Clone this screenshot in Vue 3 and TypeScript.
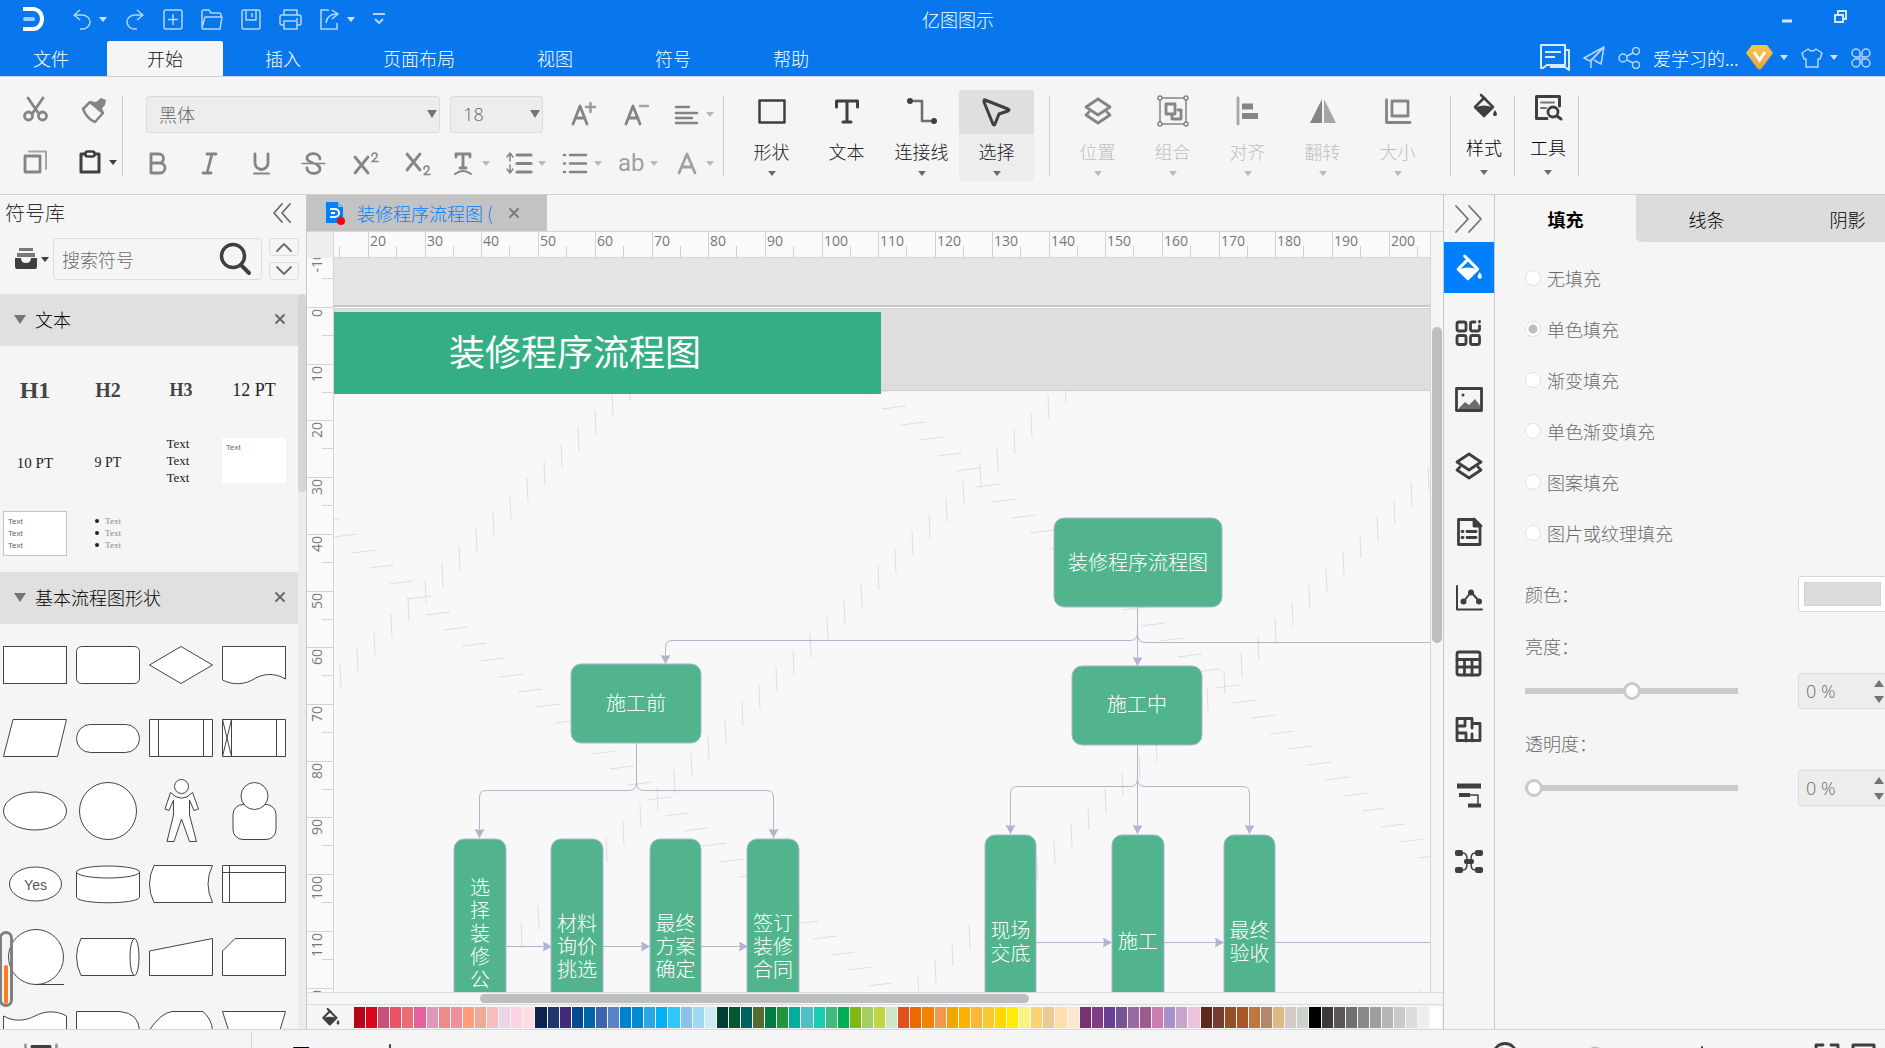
<script setup lang="ts">
import { ref } from 'vue'

interface Tool { label: string; icon: string; caret?: boolean; active?: boolean }
interface Node { x: number; y: number; w: number; h: number; lines: string[]; ty: number }

const menus = ['插入', '页面布局', '视图', '符号', '帮助']

const bucket = '<path d="M9 1l4 4"/><path d="M12 4l9 9-9 9-9-9z"/><path d="M4 13q8-3 16 0l-8 9z" fill="currentColor" stroke="none"/><path d="M23 16c3 4 2 6 0 6s-3-2 0-6z" fill="currentColor" stroke="none"/>'
const layers = '<path d="M14 2l12 8-12 8L2 10z"/><path d="M5 15l-3 3 12 8 12-8-3-3"/>'

const quick = [
  { name: '撤销', w: 20, caret: true, icon: '<path d="M8 1L2 6l6 5M2 6h8a8 7 0 010 14H8"/>' },
  { name: '重做', w: 20, icon: '<path d="M12 1l6 5-6 5M18 6h-8a8 7 0 000 14h2"/>' },
  { name: '新建', w: 20, icon: '<rect x="1" y="1" width="18" height="19" rx="2"/><path d="M10 5v11M5 10.500h10"/>' },
  { name: '打开', w: 22, icon: '<path d="M1 19V3q0-2 2-2h5l2 3h8q2 0 2 2v2M1 19L4 8h17l-2 12H2q-1 0-1-1z"/>' },
  { name: '保存', w: 20, icon: '<rect x="1" y="1" width="18" height="19" rx="2"/><path d="M5 1v10h10V1M11 4v4"/>' },
  { name: '打印', w: 23, icon: '<path d="M5 6V1h13v5M5 16H3q-2 0-2-2V8q0-2 2-2h17q2 0 2 2v6q0 2-2 2h-2M18 9v2"/><path d="M5 12h13v8H5z"/>' },
  { name: '导出', w: 20, caret: true, icon: '<path d="M9 1H1v19h16v-6M6 14q1-9 11-9M12 1l6 4-6 5"/>' }
]

const drawTools: Tool[] = [
  { label: '形状', caret: true, icon: '<rect x="1.500" y="2.500" width="25" height="22" stroke-width="2.500"/>' },
  { label: '文本', icon: '<path d="M3.500 9V3h21v6M14 3v21M10 24h8" stroke-width="3"/>' },
  { label: '连接线', caret: true, icon: '<circle cx="2" cy="3" r="3" fill="currentColor" stroke="none"/><circle cx="26" cy="23" r="3" fill="currentColor" stroke="none"/><path d="M6 3h8v20h8" stroke-opacity=".75" stroke-width="2.500"/>' },
  { label: '选择', caret: true, active: true, icon: '<path d="M2 2l23 9q2 1 0 2l-9 3-4 10q-1 2-2 0L1 4q0-3 1-2z" stroke-width="3"/>' }
]
const arrangeTools: Tool[] = [
  { label: '位置', caret: true, icon: '<g transform="translate(0 -1)">' + layers + '</g>' },
  { label: '组合', caret: true, icon: '<g stroke-width="1.500"><rect x="1" y="0" width="26" height="26"/></g><rect x="7" y="6" width="9" height="10"/><path d="M19 12h3v9h-9v-3"/><g fill="#f5f5f5" stroke-width="1.500"><circle cx="1" cy="0" r="2"/><circle cx="27" cy="0" r="2"/><circle cx="1" cy="26" r="2"/><circle cx="27" cy="26" r="2"/></g>' },
  { label: '对齐', caret: true, icon: '<path d="M4 0v26" stroke-opacity=".7"/><path d="M8 8.500h11M8 18h16" stroke-width="6" stroke-linecap="butt"/>' },
  { label: '翻转', caret: true, icon: '<path d="M13 1v24H1z" fill="currentColor" stroke="none"/><path d="M15 1v24h12z" fill="currentColor" stroke="none" opacity=".7"/>' },
  { label: '大小', caret: true, icon: '<path d="M2.500 2v22.500H26"/><rect x="8" y="3" width="16" height="15"/>' }
]
const endTools: Tool[] = [
  { label: '样式', caret: true, icon: '<g transform="translate(2 1)" stroke-width="2.500">' + bucket + '</g>' },
  { label: '工具', caret: true, icon: '<path d="M13 25.500H2.500v-22h23V13" stroke-width="3"/><path d="M7 9.500h13M7 15h5" stroke-width="2" stroke-opacity=".7"/><circle cx="19" cy="19" r="5"/><path d="M23 23l4 3" stroke-width="3"/>' }
]

const formats = [
  { name: '加粗', icon: '<path d="M6 3h8a4.500 4.500 0 010 9H6zM6 12h9a5 5 0 010 10H6z"/>' },
  { name: '斜体', icon: '<path d="M10 3h9M6 22h8M15 3l-5 19"/>' },
  { name: '下划线', icon: '<path d="M6 3v9a6.500 6.500 0 0013 0V3"/><path d="M5 22.500h15" stroke-width="2"/>' },
  { name: '删除线', icon: '<path d="M19 8c0-7-13-7-13-1 0 3 3 4 6 5M6 17c0 7 13 7 13 1 0-3-2-4-4-5"/><path d="M1 12.500h23" stroke-width="1.500"/>' },
  { name: '上标', icon: '<path d="M2 6l13 16M15 6L2 22"/><path d="M19 5q0-3 2.500-3T24 4.500q0 2-5 6h6" stroke-width="1.500"/>' },
  { name: '下标', icon: '<path d="M2 3l13 16M15 3L2 19"/><path d="M19 18q0-3 2.500-3t2.500 2.500q0 2-5 6h6" stroke-width="1.500"/>' }
]
const formatMenus = [
  { name: '文字方向', icon: '<path d="M6 6V3h14v3M13 3v14M10 17h6"/><path d="M5 23q8-6 16 0" stroke-width="2"/>' },
  { name: '行距', icon: '<path d="M1 6l3-4 3 4M1 18l3 4 3-4M4 3v7M4 14v7" stroke-width="1.500"/><path d="M11 4h14M11 12.500h14M11 21h14" stroke-width="3"/>' },
  { name: '项目符号', icon: '<path d="M8 4h16M8 12.500h16M8 21h16M2 4h1M2 12.500h1M2 21h1" stroke-width="2.500"/>' }
]

const sideTools = [
  { name: '图形', icon: '<rect x="2" y="2" width="9" height="9" rx="2"/><rect x="2" y="15.500" width="9" height="9" rx="2"/><rect x="15.500" y="15.500" width="9" height="9" rx="2"/><path d="M20 2h-3q-1.500 0-1.500 2v5q0 2 2 2h5q2 0 2-2V6"/><path d="M24.500 1.500v.5"/>' },
  { name: '图片', icon: '<rect x="1.500" y="2.500" width="25" height="22"/><path d="M4 22l6-6 4 3 6-6 6 8v2H4z" fill="currentColor" stroke="none" opacity=".75"/><circle cx="8" cy="9" r="1.500" fill="currentColor" stroke="none"/>' },
  { name: '图层', icon: layers },
  { name: '页面', icon: '<path d="M3.500 1.500H19l6 6v19H3.500z"/><path d="M19 1v7h7z" fill="currentColor"/><path d="M12 13.500h9M12 19.500h9M7 13.500h1M7 19.500h1"/>' },
  { name: '图表', icon: '<path d="M2 2v23.500h25M9 17l7-9 8 9" stroke-width="2"/><g fill="currentColor" stroke="none"><circle cx="8.500" cy="17.500" r="3"/><circle cx="16" cy="8.500" r="3"/><circle cx="24" cy="17.500" r="3"/></g>' },
  { name: '表格', icon: '<rect x="2" y="2" width="23" height="23" rx="2"/><path d="M2 9.500h23M2 17h23M9.500 10v15M17 10v15"/>' },
  { name: '平面图', icon: '<path d="M2 2.500h15v5h8v17H2zM2 10h8V4M2 17h9v8M17 7v5M17 25v-7"/>' },
  { name: '甘特图', icon: '<path d="M2 4h24" stroke-width="5" stroke-linecap="butt"/><path d="M4 13h11M13 23.500h13" stroke-width="4" stroke-linecap="butt"/><path d="M15 13h8v10" stroke-width="1.500"/>' },
  { name: '思维导图', icon: '<g fill="currentColor" stroke="none"><rect x="0" y="2" width="8" height="6" rx="2"/><rect x="20" y="2" width="8" height="6" rx="2"/><rect x="0" y="19" width="8" height="6" rx="2"/><rect x="20" y="19" width="8" height="6" rx="2"/><rect x="9" y="11" width="10" height="5" rx="2"/></g><path d="M8 5q4 0 4 6v5q0 6-4 6M20 5q-4 0-4 6v5q0 6 4 6" stroke-width="1.500"/>' }
]

const shapes = [
  '<rect x=".5" y="13.500" width="63" height="37"/>',
  '<rect x=".5" y="13.500" width="63" height="37" rx="5"/>',
  '<path d="M.5 32L32 13.500 63.500 32 32 50.500z"/>',
  '<path d="M.5 13.500h63V46C52 39 40 41 32 46S12 53 .5 47z"/>',
  '<path d="M10 13.500h53.500l-9 37H.5z"/>',
  '<rect x=".5" y="18.500" width="63" height="28" rx="14"/>',
  '<path d="M.5 13.500h63v37H.5zM9.500 13.500v37M54.500 13.500v37"/>',
  '<path d="M.5 13.500h63v37H.5zM9.500 13.500v37M54.500 13.500v37M.5 13.500l9 37M9.500 13.500l-9 37"/>',
  '<ellipse cx="32" cy="32" rx="31.500" ry="19"/>',
  '<circle cx="32" cy="32" r="28.500"/>',
  '<circle cx="32.500" cy="7.500" r="7"/><path d="M21.500 13.500L16 30l4 1.500L24.500 21v15L18 62.500h7L32.500 40l8 22.500h7L40.500 36V21L45 31.500l4.500-1.500-6-16.500Q32.500 25 21.500 13.500z"/>',
  '<rect x="11" y="25.500" width="43" height="35" rx="10"/><circle cx="32.500" cy="17" r="13.500"/>',
  '<ellipse cx="32.500" cy="32" rx="26" ry="17"/><text x="32.500" y="38" text-anchor="middle">Yes</text>',
  '<path d="M.5 20v25.500c4 7 59 7 63 0V20"/><ellipse cx="32" cy="20" rx="31.500" ry="6"/>',
  '<path d="M5 13.500h58.500q-9 18 0 37H5q-9-18 0-37z"/>',
  '<path d="M.5 13.500h63v37H.5zM7.500 13.500v37M.5 20.500h63"/>',
  '<circle cx="33" cy="32" r="27.500"/><path d="M33 59.500h28"/>',
  '<path d="M59 13.500H5q-9 18 0 37h54"/><ellipse cx="58.500" cy="32" rx="4.500" ry="18.500"/>',
  '<path d="M.5 26l63-12.500v37H.5z"/>',
  '<path d="M13 13.500h50.500v37H.5V26z"/>',
  '<path d="M.5 18c10 6 22 5 31.500 0s21-6 31.500 0v40H.5z"/>',
  '<path d="M.5 13.500H44q19 2 19.500 19V50H.5z"/>',
  '<path d="M.5 32Q12 15 23 13.500h31q9 8 9.500 19L54 50H23z"/>',
  '<path d="M.5 13.500h63l-11 37h-40z"/>'
]

const step = 56.71
const hMarks = Array.from({ length: 20 }, (_, i) => ({ label: i ? String(i * 10 + 10) : '', at: Math.round(35 + (i - 1) * step) }))
const vMarks = Array.from({ length: 14 }, (_, i) => ({ label: String(i * 10 - 10), at: Math.round(49 + (i - 1) * step) }))

const run = (x: number, y: number, dx: number, dy: number, n: number) =>
  Array.from({ length: n }, (_, i) => [Math.round(x + dx * i), Math.round(y + dy * i)])
const steep = [
  ...run(295, 118, -17, 17, 18),
  ...run(731, 121, -17, 17, 37),
  ...run(1094, 208, -17, 17, 32),
  ...run(1086, 732, -17, 17, 1)
]
const flat = [...run(-19, 264, 18.43, 15.45, 31), ...run(530, 136, 18.45, 15.45, 31)]

const nodes: Node[] = [
  { x: 720, y: 260, w: 168, h: 89, lines: ['装修程序流程图'], ty: 303 },
  { x: 237, y: 406, w: 130, h: 79, lines: ['施工前'], ty: 444 },
  { x: 738, y: 408, w: 130, h: 79, lines: ['施工中'], ty: 445 },
  { x: 120, y: 581, w: 52, h: 230, lines: ['选', '择', '装', '修', '公'], ty: 628 },
  { x: 217, y: 581, w: 52, h: 230, lines: ['材料', '询价', '挑选'], ty: 664 },
  { x: 316, y: 581, w: 51, h: 230, lines: ['最终', '方案', '确定'], ty: 664 },
  { x: 413, y: 581, w: 52, h: 230, lines: ['签订', '装修', '合同'], ty: 664 },
  { x: 651, y: 577, w: 51, h: 230, lines: ['现场', '交底'], ty: 671 },
  { x: 778, y: 577, w: 52, h: 230, lines: ['施工'], ty: 682 },
  { x: 890, y: 577, w: 51, h: 230, lines: ['最终', '验收'], ty: 671 }
]
const links = [
  'M803.500 349V408', 'M803.500 375q0 7-7 7.500H338.500q-7 0-7 7V406', 'M803.500 376q0 8 8 8.500H1200',
  'M302.500 485v40q0 7-7 7.500H152.500q-7 0-7 7V580', 'M302.500 525q0 7 7 7.500H432.500q7 0 7 7V580',
  'M803.500 487V576', 'M803.500 521q0 7-7 7.500H683.500q-7 0-7 7V576', 'M803.500 521q0 7 7 7.500H908.500q7 0 7 7V576',
  'M172 688.500h46', 'M269 688.500h47', 'M367 688.500h47', 'M702 684.500h76', 'M830 684.500h60', 'M941 684.500h260'
]
const downArrows = [[803.5, 408], [331.5, 406], [145.5, 580], [439.5, 580], [803.5, 576], [676.5, 576], [915.5, 576]]
const rightArrows = [[218, 688.5], [316, 688.5], [414, 688.5], [778, 684.5], [890, 684.5]]

const palette = ('b50716 d9061b c8507a ea5365 eb6c74 e5619c e198b8 ed8b8a ef909d ff9e78 eeaa96 f5bdbd ead5e9 ffd3e4 ffdde2 ' +
  '0f2353 21386e 402c7a 064a90 0066a9 3f62ae 5583c5 0080cf 008acf 2ba7e2 00b2f3 30c8fb 8cc1ec a0d8ef ceeaf6 ' +
  '003f31 005a2d 006160 556b2f 007b43 1f963c 00ae9d 51bec3 1accb1 45b97d 00af53 7fb80e a3cf62 bed742 cde6c7 ' +
  'e2501f eb6a00 f08300 f39850 f2a600 ffb100 fcb738 f8ca31 ffd800 ffed00 fbf283 fcd371 e9ca97 ffdead fce8d0 ' +
  '783171 823d84 693f96 775498 9969a0 9e5a8c cc7db0 a890cd c7a4c9 ebc3da 5c291b 773c30 954f27 a85626 c0773d b4866b deb887 d5cbc6 cad3cb ' +
  '000000 3e3938 595757 717071 898989 9e9e9f b4b5b5 c9caca dcdcdc eeeeee ffffff').split(' ').map(c => '#' + c)

const fills = ['无填充', '单色填充', '渐变填充', '单色渐变填充', '图案填充', '图片或纹理填充']
const fill = ref('单色填充')
const keyword = ref('')
const sliders = ref([
  { id: 'brightness', label: '亮度：', min: -100, value: 0 },
  { id: 'opacity', label: '透明度：', min: 0, value: 0 }
])
</script>

<template>
  <div class="app">
    <header class="head">
      <div class="titlebar">
        <svg class="logo" width="24" height="26" viewBox="0 0 24 26"><path d="M1 3h10a9 10 0 010 20H1" fill="none" stroke="#fff" stroke-width="4" /><path d="M3 13h8" stroke="#9fcbfb" stroke-width="4" stroke-linecap="round" /></svg>
        <div class="quick">
          <button v-for="q in quick" :key="q.name" :aria-label="q.name" class="qbtn">
            <svg :width="q.w" height="21" class="line" v-html="q.icon" />
            <i v-if="q.caret" class="caret" />
          </button>
          <button class="qbtn" aria-label="自定义"><svg width="12" height="14" class="line"><path d="M0 2h12M2 7l4 4 4-4" stroke-width="2" /></svg></button>
        </div>
        <h1>亿图图示</h1>
        <div class="win">
          <button aria-label="最小化"><svg width="10" height="14"><path d="M0 11h10" stroke="#d5e7fc" stroke-width="3" /></svg></button>
          <button aria-label="还原"><svg width="13" height="14" fill="none" stroke="#d5e7fc" stroke-width="2"><path d="M4 5V1h8v8H9M1 5h8v7H1z" /></svg></button>
        </div>
      </div>
      <nav class="menubar">
        <button class="menu first">文件</button>
        <button class="menu on">开始</button>
        <button v-for="m in menus" :key="m" class="menu">{{ m }}</button>
        <div class="account">
          <button aria-label="消息"><svg width="30" height="27" class="line thick"><path d="M1 1h24v20H7l-4 3H1zM5 8h16M5 13h10M26 6h3v20l-4-3H10" /></svg></button>
          <button aria-label="发送"><svg width="22" height="23" class="line"><path d="M21 1L1 12l6 3zM21 1L8 15v7M21 1l-3 17-7-4" /></svg></button>
          <button aria-label="分享"><svg width="22" height="22" class="line"><circle cx="5" cy="11" r="4" /><circle cx="18" cy="4" r="3.500" /><circle cx="18" cy="18" r="3.500" /><path d="M9 9l6-3M9 13l6 3" /></svg></button>
          <button class="user">
            <span class="uname">爱学习的...</span>
            <svg width="27" height="25"><defs><linearGradient id="gem" x2="0" y2="1"><stop stop-color="#ffc34d" /><stop offset="1" stop-color="#e8a243" /></linearGradient></defs><path d="M6 0h15l6 8-11 15q-2.500 3-5 0L0 8z" fill="url(#gem)" /><path d="M8 7l5.500 8L19 7" fill="none" stroke="#fff" stroke-width="3" /></svg>
            <i class="caret" />
          </button>
          <button class="user" aria-label="皮肤"><svg width="22" height="20" class="line"><path d="M7 1q4 4 8 0l6 4-2 6h-2v8H5v-8H3L1 5z" /></svg><i class="caret" /></button>
          <button aria-label="应用"><svg width="20" height="20" class="line"><path d="M9 9H5a4 4 0 114-4zM11 9h4a4 4 0 10-4-4zM9 11H5a4 4 0 104 4zM11 11h4a4 4 0 11-4 4z" /></svg></button>
        </div>
      </nav>
    </header>

    <section class="ribbon">
      <div class="clip">
        <button aria-label="剪切"><svg width="25" height="24" class="ico"><path d="M5 0l11 16M20 0L9 16" /><circle cx="5.500" cy="18" r="4" /><circle cx="19.500" cy="18" r="4" /></svg></button>
        <button aria-label="格式刷"><svg width="26" height="25" class="ico"><path d="M10 4l13 11-8 9q-8-3-12-13z" stroke-width="2.500" /><path d="M10 3l6 1 5-4 5 2-1 5-3 3 2 5z" fill="currentColor" stroke="none" /></svg></button>
        <button aria-label="复制"><svg width="25" height="24" class="ico"><path d="M2 6h15v16H2z" /><path d="M6 1.500h17V19" stroke-width="2" stroke-opacity=".7" /></svg></button>
        <button aria-label="粘贴" class="dark paste"><svg width="22" height="24" class="ico"><path d="M6 4H2v18h18V4h-4" stroke-width="3" /><rect x="6.500" y="1.500" width="9" height="5" rx="2" stroke-width="2.500" /></svg><i class="caret" /></button>
      </div>
      <i class="sep" />
      <div class="fonts">
        <div class="frow">
          <label class="sel family"><select aria-label="字体"><option>黑体</option></select><i class="tri" /></label>
          <label class="sel size"><select aria-label="字号"><option>18</option></select><i class="tri" /></label>
          <button class="fbtn grow" aria-label="增大字号"><svg width="25" height="24" class="ico"><path d="M2 22L9 4l7 18M5 16h9" /><path d="M15 5h9M19.500 1v9" stroke-width="2.500" stroke-opacity=".8" /></svg></button>
          <button class="fbtn" aria-label="减小字号"><svg width="25" height="24" class="ico"><path d="M3 22l7-18 7 18M6 16h9" /><path d="M17 4h8" stroke-width="2.500" stroke-opacity=".7" /></svg></button>
          <button class="fmenu align" aria-label="对齐方式"><svg width="26" height="25" class="ico"><path d="M2 5h13M2 11h21M2 16h16M2 21h21" stroke-width="2.500" /></svg><i class="caret" /></button>
        </div>
        <div class="frow">
          <button v-for="f in formats" :key="f.name" class="fbtn" :aria-label="f.name"><svg width="25" height="25" class="ico" v-html="f.icon" /></button>
          <button v-for="f in formatMenus" :key="f.name" class="fmenu" :aria-label="f.name"><svg width="26" height="25" class="ico" v-html="f.icon" /><i class="caret" /></button>
          <button class="fmenu letters" aria-label="字符间距"><span>ab</span><i class="caret" /></button>
          <button class="fmenu letters" aria-label="字体颜色"><svg width="26" height="25" class="ico"><path d="M5 22l8-19 8 19M8 16h10" /></svg><i class="caret" /></button>
        </div>
      </div>
      <i class="sep" />
      <div class="tools">
        <button v-for="t in drawTools" :key="t.label" class="tool" :class="{ active: t.active }">
          <span class="pic"><svg width="28" height="28" class="ico" v-html="t.icon" /></span><span class="cap">{{ t.label }}</span><i v-if="t.caret" class="caret" />
        </button>
      </div>
      <i class="sep" />
      <div class="tools off">
        <button v-for="t in arrangeTools" :key="t.label" class="tool">
          <span class="pic"><svg width="28" height="28" class="ico" v-html="t.icon" /></span><span class="cap">{{ t.label }}</span><i class="caret" />
        </button>
      </div>
      <template v-for="t in endTools" :key="t.label">
        <i class="sep" />
        <button class="tool narrow"><span class="pic"><svg width="28" height="28" class="ico" v-html="t.icon" /></span><span class="cap">{{ t.label }}</span><i class="caret" /></button>
      </template>
      <i class="sep" />
    </section>

    <main class="work">
      <aside class="library">
        <div class="lhead"><h2>符号库</h2><button aria-label="收起"><svg width="18" height="20" class="ico slim"><path d="M9 1L1 10l8 9M17 1l-8 9 8 9" /></svg></button></div>
        <div class="lsearch">
          <button class="dark libbtn" aria-label="符号库"><svg width="22" height="22"><path d="M4 1.500h14" stroke="#777" stroke-width="3" /><path d="M2 7h18" stroke="#777" stroke-width="4" /><path d="M0 10h6q0 5 5 5t5-5h6v9q0 2-2 2H2q-2 0-2-2z" fill="#3f3f3f" /></svg><i class="caret" /></button>
          <div class="sbox"><input v-model="keyword" placeholder="搜索符号" aria-label="搜索符号"><button class="dark" aria-label="搜索"><svg width="33" height="34" class="ico"><circle cx="13" cy="14" r="11.500" stroke-width="3.500" /><path d="M21 23l8 8" stroke-width="4" /></svg></button></div>
          <div class="updown">
            <button aria-label="上一个"><svg width="18" height="10" class="ico slim"><path d="M2 9l7-7 7 7" /></svg></button>
            <button aria-label="下一个"><svg width="18" height="10" class="ico slim"><path d="M2 1l7 7 7-7" /></svg></button>
          </div>
        </div>
        <div class="lscroll">
          <div class="lbody">
            <div class="lsec"><i class="tri" /><h3>文本</h3><button aria-label="关闭文本"><svg width="12" height="12" class="ico slim"><path d="M2 2l8 8M10 2l-8 8" /></svg></button></div>
            <div class="grid texts">
              <b class="h1">H1</b><b class="h2">H2</b><b class="h3">H3</b><span class="p12">12 PT</span>
              <span class="p10">10 PT</span><span class="p9">9 PT</span><span class="para">Text<br>Text<br>Text</span><span class="card">Text</span>
              <span class="card ruled">Text<br>Text<br>Text</span>
              <ul><li>Text</li><li>Text</li><li>Text</li></ul>
            </div>
            <div class="lsec"><i class="tri" /><h3>基本流程图形状</h3><button aria-label="关闭基本流程图形状"><svg width="12" height="12" class="ico slim"><path d="M2 2l8 8M10 2l-8 8" /></svg></button></div>
            <div class="grid"><svg v-for="(s, i) in shapes" :key="i" width="64" height="64" class="shape" v-html="s" /></div>
          </div>
          <div class="ltrack"><i /></div>
        </div>
        <div class="gauge"><i /></div>
      </aside>

      <section class="center">
        <div class="docs">
          <div class="doc">
            <svg width="20" height="23"><path d="M1 0h12l5 5v16H1z" fill="#0080ff" /><path d="M13 0l5 5h-5z" fill="#7fbcf5" /><path d="M5 7h5a4 4 0 010 8H5M6 11h4" fill="none" stroke="#fff" stroke-width="2" /><circle cx="16" cy="19" r="4" fill="#f00" /></svg>
            <span>装修程序流程图 (</span>
            <button aria-label="关闭"><svg width="12" height="12" class="ico slim"><path d="M2 2l8 8M10 2l-8 8" /></svg></button>
          </div>
        </div>
        <div class="view">
          <div class="stage">
            <div class="corner" />
            <svg class="hruler" width="100%" height="25">
              <g v-for="m in hMarks" :key="m.at">
                <path :d="`M${m.at - 0.5} 0v25M${m.at + 27.5} 14v11`" /><text v-if="m.label" :x="m.at + 1" y="14">{{ m.label }}</text>
              </g>
            </svg>
            <svg class="vruler" width="26" height="100%">
              <g v-for="m in vMarks" :key="m.at">
                <path :d="`M0 ${m.at + 0.5}h26M15 ${m.at + 28.5}h11`" /><text text-anchor="end" :transform="`translate(15 ${m.at + 2}) rotate(-90)`">{{ m.label }}</text>
              </g>
            </svg>
            <div class="canvas">
              <svg width="100%" height="100%">
                <rect width="100%" height="48" fill="#e4e4e4" />
                <rect y="47" width="100%" height="2" fill="#c8c8c8" />
                <rect y="49" width="100%" height="1" fill="#fbfbfb" /><rect y="50" width="100%" height="1" fill="#d2d2d2" />
                <g stroke="#dfdfdf">
                  <path v-for="(p, i) in steep" :key="'s' + i" :d="`M${p[0]} ${p[1]}l1 24`" />
                  <path v-for="(p, i) in flat" :key="'f' + i" :d="`M${p[0]} ${p[1]}l24-3`" />
                </g>
                <rect y="51" width="100%" height="81" fill="#dedede" /><rect y="132" width="100%" height="1" fill="#d0d0d0" />
                <rect y="54" width="547" height="82" fill="#34ae82" />
                <text class="banner" x="241" y="92" text-anchor="middle" dominant-baseline="central">装修程序流程图</text>
                <g fill="none" stroke="#adb5d1" stroke-width="1"><path v-for="d in links" :key="d" :d="d" /></g>
                <g fill="#adb5d1">
                  <path v-for="(a, i) in downArrows" :key="'d' + i" :d="`M${a[0]} ${a[1]}l-5-9 5 1 5-1z`" />
                  <path v-for="(a, i) in rightArrows" :key="'r' + i" :d="`M${a[0]} ${a[1]}l-9-5 1 5-1 5z`" />
                </g>
                <g v-for="(n, i) in nodes" :key="i">
                  <rect :x="n.x" :y="n.y" :width="n.w" :height="n.h" rx="10" fill="#51b48d" stroke="#adb5d1" />
                  <text v-for="(t, j) in n.lines" :key="j" class="kai" :x="n.x + n.w / 2" :y="n.ty + j * 23" text-anchor="middle" dominant-baseline="central">{{ t }}</text>
                </g>
              </svg>
            </div>
          </div>
          <div class="vbar"><i /></div>
        </div>
        <div class="hbar"><i /></div>
        <div class="palette">
          <button class="dark" aria-label="填充颜色"><svg width="20" height="21" viewBox="0 0 27 25" class="ico" v-html="bucket" /></button>
          <div class="swatches"><button v-for="c in palette" :key="c" :aria-label="c" :style="{ background: c }" /></div>
        </div>
      </section>

      <nav class="strip">
        <button class="fold" aria-label="展开"><svg width="28" height="28" class="ico slim"><path d="M1 1l12 13L1 27M14 1l12 13-12 13" /></svg></button>
        <button class="picked" aria-label="填充"><svg width="28" height="28" viewBox="0 0 26 24" class="ico" v-html="bucket" /></button>
        <button v-for="s in sideTools" :key="s.name" :aria-label="s.name"><svg width="28" height="28" class="ico" v-html="s.icon" /></button>
      </nav>

      <aside class="props">
        <div class="ptabs"><button class="on">填充</button><button class="next">线条</button><button>阴影</button></div>
        <div class="radios"><label v-for="f in fills" :key="f"><input v-model="fill" type="radio" name="fill" :value="f">{{ f }}</label></div>
        <div class="prow colour"><label for="colour">颜色：</label><button id="colour" class="chip" aria-label="颜色"><i /></button></div>
        <div v-for="s in sliders" :key="s.id" class="pslider">
          <label :for="s.id">{{ s.label }}</label>
          <div class="prow">
            <input :id="s.id" v-model.number="s.value" type="range" :min="s.min" max="100">
            <div class="spin"><input type="text" :value="s.value + ' %'" :aria-label="s.label + '数值'"><span><button aria-label="增加"><i class="tri up" /></button><button aria-label="减少"><i class="tri" /></button></span></div>
          </div>
        </div>
      </aside>
    </main>

    <footer class="status">
      <div class="sleft"><svg width="34" height="20" class="ico"><path d="M1.500 0v20M32.500 0v20" stroke-opacity=".5" /><path d="M8 20V1.500h18V20" /></svg><span>页-1</span></div>
      <div class="smid"><b>页-1</b><svg width="14" height="18" class="ico"><path d="M7 1v16M0 9h14" stroke-width="2" /></svg></div>
      <div class="sright">
        <svg width="26" height="26" class="ico"><circle cx="13" cy="13" r="11.500" /><path d="M10 7l8 6-8 6z" /></svg>
        <svg class="zoom" width="120" height="18"><path d="M0 9h120" stroke="#cacaca" stroke-width="4" /><circle cx="37" cy="9" r="7" fill="#fff" stroke="#bbb" stroke-width="3" /></svg>
        <svg class="ico" width="16" height="18"><path d="M8 1v16M0 9h16" stroke-width="2" /></svg>
        <span>100%</span>
        <svg width="24" height="24" class="ico full"><path d="M1 8V2h7M16 2h7v6M1 16v6h7M16 22h7v-6" /></svg>
        <svg width="25" height="24" class="ico"><path d="M2 2h21v20H2z" stroke-width="3" /></svg>
      </div>
    </footer>
  </div>
</template>

<style>
body { margin: 0; overflow: hidden; }
.shape text { font: 14px "Liberation Sans", sans-serif; fill: #555; stroke: none; }
</style>

<style scoped>
* { box-sizing: border-box; }
.app { display: flex; flex-direction: column; height: 100vh; overflow: hidden; background: #f5f5f5; color: #222; font: 300 18px/24px "Microsoft YaHei Light", "Noto Sans CJK SC", "Noto Sans", sans-serif; }
button { display: flex; align-items: center; justify-content: center; flex: none; padding: 0; border: 0; background: none; color: inherit; font: inherit; cursor: pointer; }
svg { display: block; flex: none; overflow: hidden; }
h1, h2, h3 { margin: 0; font: inherit; }
.line { fill: none; stroke: #b5d6f9; stroke-width: 1.500; stroke-linejoin: round; }
.thick { stroke: #d9eafd; stroke-width: 2; overflow: visible; }
.ico { fill: none; stroke: currentColor; stroke-width: 2.800; stroke-linecap: round; stroke-linejoin: round; overflow: visible; }
.slim { stroke-width: 1.800; }
.caret { flex: none; width: 0; height: 0; border: solid transparent; border-width: 5px 4px 0; border-top-color: currentColor; }
.tri { flex: none; width: 0; height: 0; border: solid transparent; border-width: 9px 6px 0; border-top-color: #747474; }
.dark { color: #3f3f3f; }

.head { flex: none; background: #0877ed; color: #fff; }
.titlebar { display: grid; grid-template-columns: 1fr auto 1fr; grid-template-areas: "a t w"; align-items: center; height: 41px; position: relative; }
.logo { position: absolute; left: 22px; top: 6px; }
.quick { grid-area: a; display: flex; align-items: center; gap: 18px; padding: 0 0 3px 72px; height: 38px; }
.qbtn { gap: 7px; color: #cfe4fb; }
h1 { grid-area: t; margin-left: 31px; padding-bottom: 3px; }
.win { grid-area: w; display: flex; justify-content: flex-end; gap: 42px; padding: 0 38px 7px 0; }
.menubar { display: flex; height: 35px; gap: 2px; }
.menu { padding: 0 40px 2px; }
.menu.first { padding: 0 36px 2px 33px; }
.menu.on { background: #f5f5f5; color: #111; border-radius: 2px 2px 0 0; height: 36px; }
.account { display: flex; align-items: center; gap: 13px; margin-left: auto; padding: 0 14px 2px 0; }
.user { gap: 7px; color: #cfe4fb; }
.uname { color: #fff; width: 87px; margin-right: -1px; white-space: nowrap; text-align: left; }

.ribbon { display: flex; flex: none; height: 119px; border-top: 1px solid #d0d0d0; border-bottom: 1px solid #d0d0d0; color: #858585; }
.sep { flex: none; width: 1px; height: 80px; margin-top: 19px; background: #cbcbcb; }
.clip { display: grid; grid-template-columns: 58px 58px; grid-template-rows: 50px 54px; padding: 8px 0 0 6px; width: 122px; align-items: center; }
.paste { gap: 8px; padding-left: 9px; }
.fonts { width: 600px; padding: 16px 0 0 8px; }
.frow { display: flex; align-items: center; height: 42px; margin-bottom: 7px; }
.sel { display: flex; align-items: center; height: 37px; border: 1px solid #dadbe0; border-radius: 3px; background: #ededed; }
.family { width: 295px; margin-left: 15px; }
.size { width: 93px; margin-left: 10px; }
.sel select { flex: 1; min-width: 0; appearance: none; border: 0; background: none; padding: 0 0 0 12px; font: inherit; color: #666; }
.size select { font-family: "Open Sans", sans-serif; }
.sel .tri { margin-right: 2px; border-width: 8px 5px 0; }
.fbtn { width: 52px; height: 30px; }
.grow { margin-left: 14px; }
.fmenu { width: 56px; height: 30px; gap: 6px; justify-content: flex-start; padding-left: 7px; }
.fmenu .caret { color: #b8b8b8; }
.align { margin-left: 6px; }
.letters { color: #a0a0a0; }
.letters span { font: 24px/28px Roboto, sans-serif; width: 26px; }
.tools { display: flex; margin: 0 15px 0 10px; }
.tool { flex-direction: column; justify-content: flex-start; width: 75px; height: 91px; margin-top: 13px; color: #3f3f3f; border-radius: 3px; }
.pic { display: flex; align-items: center; justify-content: center; width: 100%; height: 44px; }
.cap { margin: 5px 0 8px; color: #222; white-space: nowrap; }
.tool .caret { color: #6b6b6b; }
.active { background: #ededed; }
.active .pic { background: #dfdfdf; border-radius: 3px 3px 0 0; }
.off .tool { color: #858585; }
.off .cap { color: #c0c0c0; }
.off .caret { color: #bbb; }
.narrow { width: 63px; padding-left: 3px; }
.narrow .pic { height: 34px; }
.narrow .cap { margin: 11px 0 11px; color: #000; }

.work { display: flex; flex: 1; min-height: 0; border-bottom: 1px solid #d6d6d6; }
.library { position: relative; display: flex; flex-direction: column; width: 306px; flex: none; color: #6b6b6b; }
.lhead { display: flex; align-items: center; justify-content: space-between; height: 36px; padding: 0 15px 0 5px; }
.lhead h2 { font-size: 20px; color: #333; }
.lsearch { display: flex; align-items: center; height: 50px; margin: 3px 0 10px; padding: 0 7px 0 15px; }
.libbtn { gap: 4px; width: 38px; justify-content: flex-start; }
.sbox { display: flex; align-items: center; flex: 1; min-width: 0; height: 42px; padding-right: 8px; border: 1px solid #dedede; border-radius: 3px; }
.sbox input { flex: 1; min-width: 0; border: 0; outline: 0; background: none; padding: 0 8px; font: inherit; }
.sbox input::placeholder { color: #6b6b6b; opacity: 1; }
.updown { display: flex; flex-direction: column; gap: 6px; margin-left: 7px; }
.updown button { width: 30px; height: 18px; border: 1px solid #dedede; border-radius: 3px; }
.lscroll { display: flex; flex: 1; min-height: 0; overflow: hidden; }
.lbody { flex: 1; min-width: 0; }
.lsec { display: flex; align-items: center; height: 52px; padding: 0 12px 2px 14px; background: #e0e0e0; gap: 9px; color: #666; }
.lsec h3 { flex: 1; color: #000; }
.ltrack { width: 8px; background: #ececec; }
.ltrack i { display: block; height: 198px; border-radius: 4px; background: #d6d6d6; }
.grid { display: grid; grid-template-columns: repeat(4, 64px); grid-auto-rows: 64px; gap: 9px; padding: 9px 3px; }
.texts { padding-bottom: 7px; align-items: center; justify-items: center; font-family: "Liberation Serif", serif; font-weight: 400; color: #222; }
.texts b, .p12, .p10, .p9 { padding-top: 5px; }
.h1 { font-size: 24px; color: #444; }
.h2 { font-size: 20px; color: #444; }
.h3 { font-size: 18px; color: #444; }
.p12 { font-size: 18px; }
.p10 { font-size: 15px; }
.p9 { font-size: 14px; }
.para { font-size: 13px; line-height: 17px; padding-right: 6px; }
.card { width: 64px; height: 45px; padding: 4px; background: #fff; font: 8px/12px "Liberation Sans", sans-serif; color: #666; }
.ruled { border: 1px solid #c4c4c4; }
ul { margin: 0; padding: 0; list-style: none; font-size: 9px; line-height: 12px; color: #888; }
li { display: flex; align-items: center; gap: 6px; }
li::before { content: ""; width: 4px; height: 4px; border-radius: 2px; background: #222; }
.shape { fill: #fff; stroke: #444; stroke-width: 1; overflow: visible; }
.gauge { position: absolute; left: -1px; bottom: 22px; width: 14px; height: 76px; padding: 0 2px; display: flex; align-items: flex-end; justify-content: center; border: 3px solid #808080; border-radius: 7px; }
.gauge i { width: 4px; height: 39px; border-radius: 2px; background: #ff7a22; flex: none; }

.center { display: flex; flex-direction: column; flex: 1; min-width: 0; border: solid #c8c8c8; border-width: 0 1px; }
.docs { display: flex; flex: none; height: 37px; border-bottom: 1px solid #d6d6d6; }
.doc { display: flex; align-items: center; width: 240px; padding-left: 18px; background: #c3c3c3; color: #0080ff; }
.doc span { margin-left: 12px; width: 139px; white-space: nowrap; }
.doc button { margin-left: 12px; color: #777; }
.view { display: flex; flex: 1; min-height: 0; }
.stage { flex: 1; min-width: 0; display: grid; grid-template-columns: 27px 1fr; grid-template-rows: 26px 1fr; }
.corner { background: #efefef; border-right: 1px solid #d6d6d6; }
.hruler, .vruler { fill: #777; background: #fafafa; font: 14px "Open Sans", sans-serif; }
.hruler { border-bottom: 1px solid #d6d6d6; height: 26px; }
.vruler { border-right: 1px solid #d6d6d6; width: 27px; min-height: 0; }
.hruler path, .vruler path { stroke: #d2d2d2; }
.canvas { position: relative; overflow: hidden; background: #f8f8f8; min-width: 0; }
.canvas > svg { position: absolute; inset: 0; }
.banner { font-size: 36px; font-weight: 400; fill: #fff; }
.kai { font-family: KaiTi, "Noto Sans CJK SC", sans-serif; font-size: 20px; fill: #fff; }
.vbar { width: 13px; border-left: 1px solid #d6d6d6; padding-top: 95px; }
.vbar i { display: block; width: 10px; height: 316px; margin-left: 1px; border-radius: 5px; background: #bebebe; }
.hbar { flex: none; height: 13px; border: solid #dadada; border-width: 1px 0; padding: 1px 0 0 173px; }
.hbar i { display: block; width: 57%; height: 9px; border-radius: 5px; background: #bebebe; }
.palette { display: flex; flex: none; align-items: center; height: 24px; padding: 0 1px 0 14px; }
.swatches { display: flex; flex: 1; gap: 1px; height: 21px; margin-left: 13px; }
.swatches button { flex: 1; }

.strip { display: flex; flex-direction: column; flex: none; width: 51px; border-right: 1px solid #c8c8c8; color: #3f3f3f; }
.strip button { height: 66px; }
.strip .fold { height: 47px; color: #747474; }
.strip .picked { height: 51px; margin-bottom: 8px; background: #0080ff; color: #fff; }

.props { flex: none; width: 390px; overflow: hidden; color: #6b6b6b; }
.ptabs { display: flex; height: 47px; color: #000; }
.ptabs button { width: 141px; background: #dcdcdc; }
.ptabs .on { background: none; font-weight: 700; }
.ptabs .next { border-bottom-left-radius: 5px; }
.radios { padding: 10px 0 0 30px; }
.radios label { display: flex; align-items: center; gap: 6px; height: 51px; }
.radios input { appearance: none; width: 16px; height: 16px; margin: 0; border: 1px solid #e0e0e0; border-radius: 8px; background: #fff; }
.radios input:checked { background: radial-gradient(#bdbdbd 0 4px, #fff 5px); }
.prow { display: flex; align-items: center; height: 36px; }
.colour { margin-top: 18px; padding-left: 30px; }
.colour label { flex: none; width: 273px; }
.chip { width: 100px; height: 36px; padding: 5px; border: 1px solid #d8d8d8; border-radius: 3px; background: #fff; justify-content: flex-start; }
.chip i { width: 77px; height: 24px; background: #dcdcdc; border: 1px solid #d2d2d2; }
.pslider { padding: 22px 0 0 30px; }
.pslider > label { display: block; margin-bottom: 15px; }
input[type="range"] { appearance: none; flex: none; width: 213px; height: 18px; margin: 0 60px 0 0; background: linear-gradient(#cacaca, #cacaca) center / 100% 6px no-repeat; border-radius: 3px; }
input[type="range"]::-webkit-slider-thumb { appearance: none; width: 18px; height: 18px; border: 3px solid #cacaca; border-radius: 9px; background: #fff; }
.spin { display: flex; flex: none; align-items: center; width: 100px; height: 36px; border: 1px solid #dadbe0; border-radius: 3px; background: #ededed; }
.spin input { width: 75px; padding: 0 0 0 7px; border: 0; background: none; color: #6b6b6b; font: inherit; font-family: "Open Sans", sans-serif; }
.spin span { display: flex; flex-direction: column; gap: 9px; }
.spin .tri { border-width: 7px 5px 0; }
.spin .up { transform: rotate(180deg); }

.status { display: flex; flex: none; height: 18px; overflow: hidden; color: #3f3f3f; }
.sleft { display: flex; align-items: flex-start; gap: 36px; width: 252px; height: 50px; padding: 13px 0 0 24px; border-right: 1px solid #d6d6d6; margin-top: 2px; }
.sleft span, .smid b { color: #000; margin-top: -2px; }
.smid { display: flex; gap: 56px; padding: 14px 0 0 40px; height: 50px; }
.smid b { font-weight: 700; }
.sright { display: flex; margin-left: auto; height: 50px; align-items: center; padding: 0 9px 0 0; color: #3f3f3f; }
.zoom { margin: 0 16px 0 40px; }
.sright span { margin: 0 40px 4px 20px; color: #000; }
.full { margin-right: 12px; }
</style>
